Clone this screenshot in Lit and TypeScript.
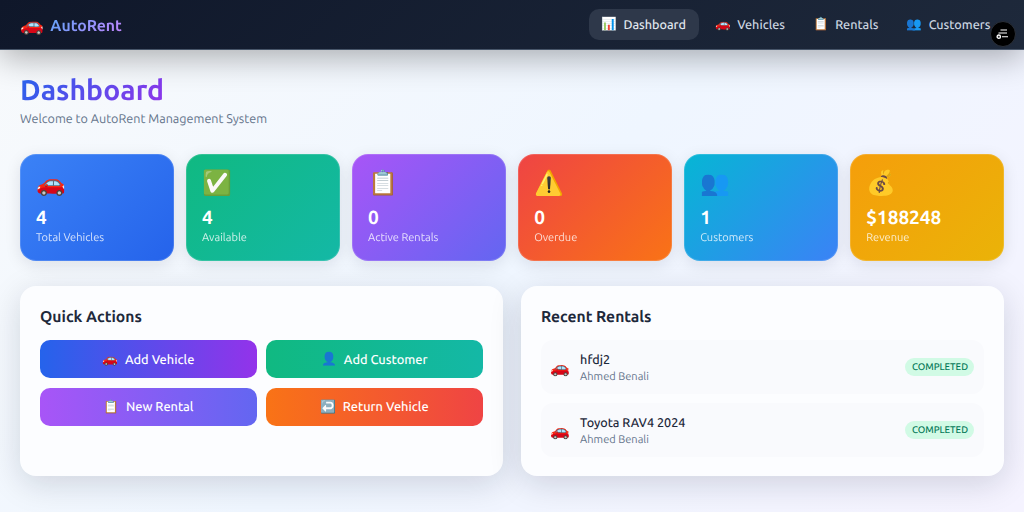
import { LitElement, css, html } from 'lit';
import { customElement } from 'lit/decorators.js';

const stats = [
  { icon: '🚗', value: '4', label: 'Total Vehicles', cls: 'blue' },
  { icon: '✅', value: '4', label: 'Available', cls: 'green' },
  { icon: '📋', value: '0', label: 'Active Rentals', cls: 'purple' },
  { icon: '⚠️', value: '0', label: 'Overdue', cls: 'red' },
  { icon: '👥', value: '1', label: 'Customers', cls: 'cyan' },
  { icon: '💰', value: '$188248', label: 'Revenue', cls: 'amber' },
];

const actions = [
  { icon: '🚗', label: 'Add Vehicle', cls: 'a-blue' },
  { icon: '👤', label: 'Add Customer', cls: 'a-green' },
  { icon: '📋', label: 'New Rental', cls: 'a-purple' },
  { icon: '↩️', label: 'Return Vehicle', cls: 'a-orange' },
];

const rentals = [
  { name: 'hfdj2', customer: 'Ahmed Benali', status: 'COMPLETED' },
  { name: 'Toyota RAV4 2024', customer: 'Ahmed Benali', status: 'COMPLETED' },
];

@customElement('app-root')
export class AppRoot extends LitElement {
  static get styles() {
    return css`
      :host {
        display: block;
        height: 512px;
        overflow: hidden;
        position: relative;
        font-family: Ubuntu, "Noto Sans", "Noto Color Emoji", sans-serif;
        text-rendering: geometricPrecision;
        background: linear-gradient(135deg, #f8fafc 0%, #eff6ff 50%, #f5f3ff 100%);
      }

      .nav {
        height: 49px;
        display: flex;
        align-items: center;
        justify-content: space-between;
        padding: 0 21px 0 20px;
        background: linear-gradient(135deg, #0f172a, #1e293b);
        border-bottom: 1px solid #475569;
        box-shadow: 0 8px 32px rgba(0, 0, 0, 0.3);
      }

      .brand {
        display: flex;
        align-items: center;
        gap: 6.4px;
        font-size: 15.8px;
        font-weight: 700;
      }

      .brand .car {
        font-size: 19.2px;
      }

      .brand .name {
        background: linear-gradient(135deg, #60a5fa, #c084fc);
        -webkit-background-clip: text;
        background-clip: text;
        color: transparent;
      }

      .links {
        display: flex;
        gap: 3px;
      }

      .link {
        display: flex;
        align-items: center;
        gap: 6.4px;
        height: 31px;
        padding: 0 12.6px;
        border-radius: 10px;
        font-size: 12.6px;
        font-weight: 500;
        color: #cbd5e1;
      }

      .link.active {
        margin-right: 1px;
        background: #2e384a;
        color: #e2e8f0;
      }

      main {
        padding: 23px 20px 0;
      }

      h1 {
        margin: 0;
        font-size: 28.4px;
        line-height: 36px;
        font-weight: 700;
        width: max-content;
        background: linear-gradient(135deg, #2563eb, #9333ea);
        -webkit-background-clip: text;
        background-clip: text;
        color: transparent;
      }

      .sub {
        margin: 2px 0 0;
        font-size: 12.6px;
        line-height: 16px;
        color: #64748b;
      }

      .stats {
        display: grid;
        grid-template-columns: repeat(6, 1fr);
        gap: 12.3px;
        margin-top: 27px;
      }

      .stat {
        height: 107px;
        box-sizing: border-box;
        padding: 14px 15px 15px;
        border: 1px solid rgba(255, 255, 255, 0.15);
        border-radius: 16px;
        color: #fff;
        box-shadow: 0 4px 16px rgba(15, 23, 42, 0.1);
      }

      .stat .icon {
        font-size: 24px;
        line-height: 28px;
      }

      .stat .value {
        margin-top: 8px;
        font-size: 19px;
        line-height: 24px;
        font-weight: 700;
      }

      .stat .label {
        margin-top: 2px;
        font-size: 11.05px;
        line-height: 14px;
        opacity: 0.8;
      }

      .blue { background: linear-gradient(135deg, #3b82f6, #2563eb); background-origin: border-box; }
      .green { background: linear-gradient(135deg, #10b981, #14b8a6); background-origin: border-box; }
      .purple { background: linear-gradient(135deg, #a855f7, #6366f1); background-origin: border-box; }
      .red { background: linear-gradient(135deg, #ef4444, #f97316); background-origin: border-box; }
      .cyan { background: linear-gradient(135deg, #06b6d4, #3b82f6); background-origin: border-box; }
      .amber { background: linear-gradient(135deg, #f59e0b, #eab308); background-origin: border-box; }

      .panels {
        display: grid;
        grid-template-columns: 1fr 1fr;
        gap: 18px;
        margin-top: 25px;
      }

      .panel {
        height: 190px;
        box-sizing: border-box;
        padding: 20px;
        border-radius: 16px;
        background: #fcfdff;
        box-shadow: 0 8px 32px rgba(15, 23, 42, 0.15);
      }

      h2 {
        margin: 0 0 13px;
        font-size: 15.7px;
        line-height: 21px;
        font-weight: 700;
        color: #1e293b;
      }

      .actions {
        display: grid;
        grid-template-columns: 1fr 1fr;
        gap: 9.6px 9px;
      }

      .action {
        height: 38px;
        box-sizing: border-box;
        padding-top: 1px;
        display: flex;
        align-items: center;
        justify-content: center;
        gap: 6.4px;
        border-radius: 10px;
        font-size: 12.8px;
        font-weight: 500;
        color: #fff;
      }

      .a-blue { background: linear-gradient(90deg, #2563eb, #9333ea); }
      .a-green { background: linear-gradient(90deg, #10b981, #14b8a6); }
      .a-purple { background: linear-gradient(90deg, #a855f7, #6366f1); }
      .a-orange { background: linear-gradient(90deg, #f97316, #ef4444); }

      .rentals {
        display: flex;
        flex-direction: column;
        gap: 9.6px;
      }

      .rental {
        height: 53.6px;
        box-sizing: border-box;
        padding: 0 9.6px;
        display: flex;
        align-items: center;
        gap: 9.6px;
        border-radius: 12px;
        background: #f9fafd;
      }

      .rental .car {
        padding-top: 2px;
        font-size: 16px;
      }

      .rental .info {
        flex: 1;
        padding-top: 3px;
      }

      .rental .name {
        font-size: 12.6px;
        line-height: 16px;
        font-weight: 500;
        color: #1e293b;
      }

      .rental .customer {
        margin-top: 2px;
        font-size: 11.05px;
        line-height: 14px;
        color: #64748b;
      }

      .badge {
        padding: 2.5px 6.4px;
        border-radius: 10px;
        font-size: 9.6px;
        line-height: 13px;
        font-weight: 500;
        color: #047857;
        background: #d1fae5;
      }

      .fab {
        position: absolute;
        left: 990px;
        top: 21px;
        width: 26px;
        height: 26px;
        box-sizing: border-box;
        border-radius: 50%;
        background: #000;
        border: 1px solid #2a2f38;
        display: flex;
        align-items: center;
        justify-content: center;
      }
    `;
  }

  render() {
    return html`
      <nav class="nav">
        <div class="brand"><span class="car">🚗</span><span class="name">AutoRent</span></div>
        <div class="links">
          <div class="link active"><span>📊</span><span>Dashboard</span></div>
          <div class="link"><span>🚗</span><span>Vehicles</span></div>
          <div class="link"><span>📋</span><span>Rentals</span></div>
          <div class="link"><span>👥</span><span>Customers</span></div>
        </div>
      </nav>
      <main>
        <h1>Dashboard</h1>
        <p class="sub">Welcome to AutoRent Management System</p>
        <section class="stats">
          ${stats.map(s => html`
            <div class="stat ${s.cls}">
              <div class="icon">${s.icon}</div>
              <div class="value">${s.value}</div>
              <div class="label">${s.label}</div>
            </div>
          `)}
        </section>
        <section class="panels">
          <div class="panel">
            <h2>Quick Actions</h2>
            <div class="actions">
              ${actions.map(a => html`
                <div class="action ${a.cls}"><span>${a.icon}</span><span>${a.label}</span></div>
              `)}
            </div>
          </div>
          <div class="panel">
            <h2>Recent Rentals</h2>
            <div class="rentals">
              ${rentals.map(r => html`
                <div class="rental">
                  <span class="car">🚗</span>
                  <div class="info">
                    <div class="name">${r.name}</div>
                    <div class="customer">${r.customer}</div>
                  </div>
                  <span class="badge">${r.status}</span>
                </div>
              `)}
            </div>
          </div>
        </section>
      </main>
      <div class="fab">
        <svg width="14" height="12" viewBox="0 0 14 12" fill="none">
          <path d="M4.5 2h6.5M2.5 5h8.5M6 8.7h6" stroke="#fff" stroke-width="1.1" />
          <circle cx="2.8" cy="8.7" r="1.7" fill="#333" stroke="#fff" stroke-width="1.3" />
        </svg>
      </div>
    `;
  }
}
